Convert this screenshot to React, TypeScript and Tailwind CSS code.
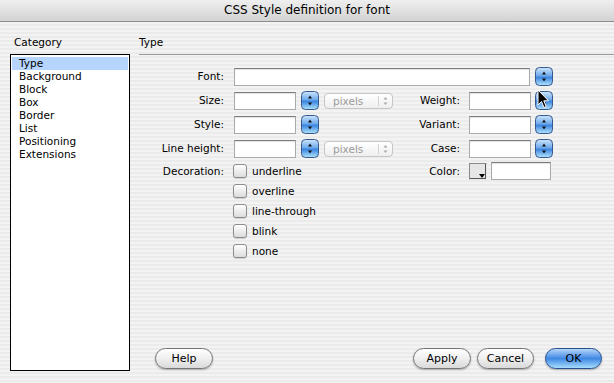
import React from 'react';

// little aqua up/down stepper
const Stepper = () => (
  <svg width="18" height="19" viewBox="0 0 18 19" className="shrink-0">
    <defs>
      <linearGradient id="stp" x1="0" y1="0" x2="0" y2="1">
        <stop offset="0" stopColor="#cfe6fc" />
        <stop offset="0.45" stopColor="#6eaaec" />
        <stop offset="0.55" stopColor="#3c86df" />
        <stop offset="1" stopColor="#b3e4fd" />
      </linearGradient>
    </defs>
    <rect x="0.5" y="0.5" width="17" height="18" rx="4" fill="url(#stp)" stroke="#34598a" />
    <path d="M9 4.5 L11 7.5 H7 Z" fill="#111" />
    <path d="M9 14.5 L11 11.5 H7 Z" fill="#111" />
  </svg>
);

const Units = () => (
  <div className="flex h-[16px] w-[69px] shrink-0 items-center rounded-[4px] border border-[#c6c6c6] bg-linear-to-b from-white to-[#efefef] text-[#9a9a9a]">
    <span className="flex-1 pl-[8px] leading-[14px]">pixels</span>
    <div className="h-[10px] w-px bg-[#d2d2d2]" />
    <svg width="13" height="10" viewBox="0 0 13 10">
      <path d="M6.5 1 L8.5 3.5 H4.5 Z M6.5 9 L8.5 6.5 H4.5 Z" fill="#a8a8a8" />
    </svg>
  </div>
);

const Field = ({ w }: { w: string }) => (
  <div className={`${w} h-[18px] shrink-0 border border-[#aaaaaa] border-t-[#7c7c7c] bg-white shadow-[inset_0_1px_1px_rgba(0,0,0,0.12)]`} />
);

const Label = ({ w, children }: { w: string; children: React.ReactNode }) => (
  <div className={`${w} shrink-0 text-right`}>{children}</div>
);

const Check = ({ label }: { label: string }) => (
  <div className="flex h-[20px] items-center gap-[5px]">
    <div className="h-[14px] w-[14px] rounded-[3px] border border-[#8c8c8c] bg-linear-to-b from-white to-[#dcdcdc] shadow-[0_1px_1px_rgba(0,0,0,0.15)]" />
    <span>{label}</span>
  </div>
);

const Btn = ({ w, children, primary }: { w: string; children: React.ReactNode; primary?: boolean }) => (
  <div
    className={
      primary
        ? `${w} flex h-[21px] items-center justify-center rounded-full border border-[#27508f] bg-linear-to-b from-[#b5d6f8] via-[#3f88e3] to-[#a6dcfc] text-[11px] shadow-[0_1px_2px_rgba(0,0,0,0.3)]`
        : `${w} flex h-[21px] items-center justify-center rounded-full border border-[#747474] bg-linear-to-b from-white via-[#efefef] to-[#d9d9d9] text-[11px] shadow-[0_1px_2px_rgba(0,0,0,0.3)]`
    }
  >
    {children}
  </div>
);

const categories = ['Type', 'Background', 'Block', 'Box', 'Border', 'List', 'Positioning', 'Extensions'];
const decorations = ['underline', 'overline', 'line-through', 'blink', 'none'];

export default function App() {
  return (
    <div className="relative flex h-[383px] w-[614px] flex-col overflow-hidden bg-[repeating-linear-gradient(to_bottom,#ebebeb_0px,#ebebeb_2px,#f3f3f3_2px,#f3f3f3_4px)] font-['DejaVu_Sans',sans-serif] text-[10.5px] leading-[13px] text-black">
      {/* title bar */}
      <div className="flex h-[22px] shrink-0 items-center justify-center border-b border-[#8e8e8e] bg-linear-to-b from-[#efefef] to-[#d3d3d3] text-[12px]">
        CSS Style definition for font
      </div>

      <div className="flex min-h-0 flex-1">
        {/* category list */}
        <div className="flex w-[130px] shrink-0 flex-col pl-[10px] pt-[14px]">
          <div className="h-[13px] pl-[4px]">Category</div>
          <div className="mt-[5px] h-[317px] border border-black bg-white px-px pt-[2px]">
            {categories.map((c, i) => (
              <div key={c} className={i === 0 ? 'h-[13px] bg-[#b5d5ff] pl-[7px]' : 'h-[13px] pl-[7px]'}>
                {c}
              </div>
            ))}
          </div>
        </div>

        {/* Type panel */}
        <div className="flex min-w-0 flex-1 flex-col pl-[9px]">
          <div className="border-b border-[#9c9c9c] pt-[14px] pb-[5px]">
            <div className="h-[13px]">Type</div>
          </div>

          <div className="mt-[12px] flex flex-col gap-[5px]">
            <div className="flex h-[19px] items-center">
              <Label w="w-[85px]">Font:</Label>
              <div className="ml-[10px]"><Field w="w-[296px]" /></div>
              <div className="ml-[5px]"><Stepper /></div>
            </div>

            <div className="flex h-[19px] items-center">
              <Label w="w-[85px]">Size:</Label>
              <div className="ml-[10px]"><Field w="w-[62px]" /></div>
              <div className="ml-[5px]"><Stepper /></div>
              <div className="ml-[5px]"><Units /></div>
              <Label w="w-[67px]">Weight:</Label>
              <div className="ml-[9px]"><Field w="w-[62px]" /></div>
              <div className="ml-[4px]"><Stepper /></div>
            </div>

            <div className="flex h-[19px] items-center">
              <Label w="w-[85px]">Style:</Label>
              <div className="ml-[10px]"><Field w="w-[62px]" /></div>
              <div className="ml-[5px]"><Stepper /></div>
              <div className="ml-[5px] w-[69px]" />
              <Label w="w-[67px]">Variant:</Label>
              <div className="ml-[9px]"><Field w="w-[62px]" /></div>
              <div className="ml-[4px]"><Stepper /></div>
            </div>

            <div className="flex h-[19px] items-center">
              <Label w="w-[85px]">Line height:</Label>
              <div className="ml-[10px]"><Field w="w-[62px]" /></div>
              <div className="ml-[5px]"><Stepper /></div>
              <div className="ml-[5px]"><Units /></div>
              <Label w="w-[67px]">Case:</Label>
              <div className="ml-[9px]"><Field w="w-[62px]" /></div>
              <div className="ml-[4px]"><Stepper /></div>
            </div>

            <div className="-mt-[2px] flex items-start">
              <div className="flex w-[254px] shrink-0">
                <div className="w-[85px] shrink-0 text-right leading-[20px]">Decoration:</div>
                <div className="ml-[9px] flex flex-col">
                  {decorations.map((d) => (
                    <Check key={d} label={d} />
                  ))}
                </div>
              </div>
              <div className="flex h-[20px] items-center">
                <Label w="w-[67px]">Color:</Label>
                <div className="relative ml-[9px] h-[17px] w-[18px] border border-[#8a8a8a] border-r-[#e8e8e8] border-b-[#e8e8e8] bg-[#e6e6e6] shadow-[inset_-1px_-1px_0_#555]">
                  <svg className="absolute right-[1px] bottom-[1px]" width="6" height="4" viewBox="0 0 6 4">
                    <path d="M0 0 H6 L3 4 Z" fill="#000" />
                  </svg>
                </div>
                <div className="ml-[4px]"><Field w="w-[60px]" /></div>
              </div>
            </div>
          </div>

          <div className="flex-1" />

          <div className="mb-[14px] flex items-center pl-[16px] pr-[12px]">
            <Btn w="w-[58px]">Help</Btn>
            <div className="flex-1" />
            <Btn w="w-[58px]">Apply</Btn>
            <div className="ml-[6px]"><Btn w="w-[57px]">Cancel</Btn></div>
            <div className="ml-[11px]"><Btn w="w-[57px]" primary>OK</Btn></div>
          </div>
        </div>
      </div>

      {/* mouse pointer */}
      <svg className="absolute left-[537px] top-[89px]" width="13" height="20" viewBox="0 0 13 20">
        <path d="M1 1 L1 16 L4.5 12.5 L7 18.5 L9.2 17.6 L6.8 11.8 L11.5 11.8 Z" fill="#000" stroke="#fff" strokeWidth="1" strokeLinejoin="round" />
      </svg>
    </div>
  );
}
